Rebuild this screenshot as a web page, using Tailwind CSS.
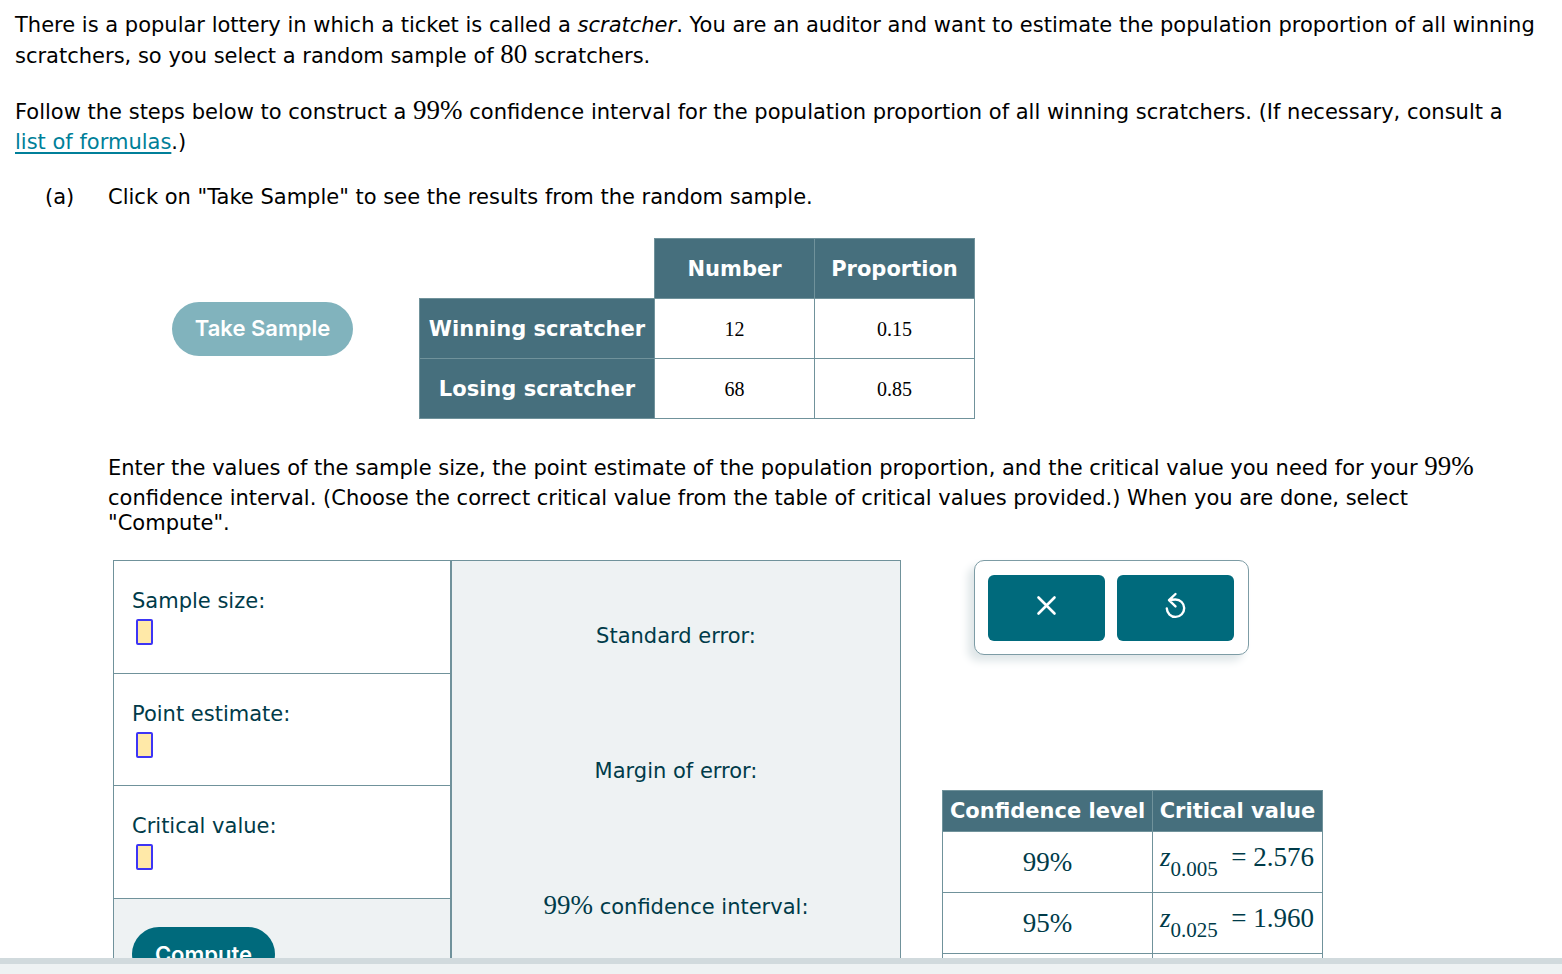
<!DOCTYPE html>
<html lang="en">
<head>
    <meta charset="UTF-8">
    <meta name="viewport" content="width=device-width, initial-scale=1.0">
    <title>Confidence interval for a population proportion</title>
    <script src="https://cdn.jsdelivr.net/npm/@tailwindcss/browser@4"></script>
</head>
<body class="h-screen flex flex-col overflow-hidden bg-white font-[Verdana,'DejaVu_Sans',sans-serif] text-[21px] leading-[25px] text-black">
    <main class="flex-1 min-h-0 overflow-hidden pt-[13px] pl-[15px] pr-3">
        <p>
            There is a popular lottery in which a ticket is called a <i>scratcher</i>. You are an auditor and want to estimate the population proportion of all winning
            scratchers, so you select a random sample of <span class="inline-block pb-1 font-['Liberation_Serif',serif] text-[27px] leading-8">80</span> scratchers.
        </p>
        <p class="mt-5">
            Follow the steps below to construct a <span class="inline-block pb-1 font-['Liberation_Serif',serif] text-[27px] leading-8">99%</span> confidence interval for the population proportion of all winning scratchers. (If necessary, consult a
            <span class="whitespace-nowrap"><a href="#formulas" class="text-[#007f99] underline decoration-2 underline-offset-3">list of formulas</a>.)</span>
        </p>

        <section class="flex mt-[30px] pl-[30px]">
            <div class="w-[63px] shrink-0">(a)</div>
            <div class="flex-1 min-w-0">
                <p>Click on "Take Sample" to see the results from the random sample.</p>

                <div class="flex items-center mt-7 pl-16">
                    <button type="button" class="w-[181px] h-[54px] rounded-full bg-[#81b3bd] text-white font-['Inter',sans-serif] font-semibold text-[22px]">Take Sample</button>
                    <table class="ml-[66px] border-collapse text-center">
                        <thead>
                            <tr class="h-[60px] text-white">
                                <td class="w-[235px]"></td>
                                <th scope="col" class="w-40 pt-0.5 bg-[#466f7d] border border-[#70929b]">Number</th>
                                <th scope="col" class="w-40 pt-0.5 bg-[#466f7d] border border-[#70929b]">Proportion</th>
                            </tr>
                        </thead>
                        <tbody class="font-['Liberation_Serif',serif] text-[20px]">
                            <tr class="h-[60px]">
                                <th scope="row" class="pt-0.5 bg-[#466f7d] border border-[#70929b] text-white font-[Verdana,'DejaVu_Sans',sans-serif] text-[21px] whitespace-nowrap">Winning scratcher</th>
                                <td class="pt-0.5 border border-[#70929b]">12</td>
                                <td class="pt-0.5 border border-[#70929b]">0.15</td>
                            </tr>
                            <tr class="h-[60px]">
                                <th scope="row" class="pt-0.5 bg-[#466f7d] border border-[#70929b] text-white font-[Verdana,'DejaVu_Sans',sans-serif] text-[21px] whitespace-nowrap">Losing scratcher</th>
                                <td class="pt-0.5 border border-[#70929b]">68</td>
                                <td class="pt-0.5 border border-[#70929b]">0.85</td>
                            </tr>
                        </tbody>
                    </table>
                </div>

                <p class="mt-[31px] pr-10">
                    Enter the values of the sample size, the point estimate of the population proportion, and the critical value you need for your <span class="inline-block pb-1 font-['Liberation_Serif',serif] text-[27px] leading-8">99%</span>
                    confidence interval. (Choose the correct critical value from the table of critical values provided.) When you are done, select "Compute".
                </p>

                <div class="flex items-start mt-6 pl-[5px] text-[#003b49]">
                    <form class="flex w-[788px] shrink-0 border border-[#70929b] bg-[#eef2f3]">
                        <div class="w-[336px]">
                            <div class="h-[113px] pt-7 pl-[18px] bg-white border-b border-[#70929b]">
                                <label for="sampleSize" class="block">Sample size:</label>
                                <input id="sampleSize" type="text" class="block w-[17px] h-[26px] mt-[5px] ml-1 rounded-[2px] border-2 border-[#3d35f5] bg-[#ffe9a8]">
                            </div>
                            <div class="h-[112px] pt-7 pl-[18px] bg-white border-b border-[#70929b]">
                                <label for="pointEstimate" class="block">Point estimate:</label>
                                <input id="pointEstimate" type="text" class="block w-[17px] h-[26px] mt-[5px] ml-1 rounded-[2px] border-2 border-[#3d35f5] bg-[#ffe9a8]">
                            </div>
                            <div class="h-[113px] pt-7 pl-[18px] bg-white border-b border-[#70929b]">
                                <label for="criticalValue" class="block">Critical value:</label>
                                <input id="criticalValue" type="text" class="block w-[17px] h-[26px] mt-[5px] ml-1 rounded-[2px] border-2 border-[#3d35f5] bg-[#ffe9a8]">
                            </div>
                            <div class="pt-7 pb-7 pl-[18px]">
                                <button type="button" class="w-[143px] h-[54px] rounded-full bg-[#006a7c] text-white font-['Inter',sans-serif] font-semibold text-[22px]">Compute</button>
                            </div>
                        </div>
                        <div class="flex-1 pt-2 border-l-2 border-[#70929b] text-center">
                            <div class="h-[135px] flex items-center justify-center">Standard error:</div>
                            <div class="h-[135px] flex items-center justify-center">Margin of error:</div>
                            <div class="h-[135px] flex items-center justify-center">
                                <p><span class="inline-block pb-1 font-['Liberation_Serif',serif] text-[27px] leading-8">99%</span> confidence interval:</p>
                            </div>
                        </div>
                    </form>

                    <div class="ml-[41px]">
                        <div class="flex gap-3 w-[275px] ml-8 px-[13px] py-3.5 h-[95px] rounded-[10px] border border-[#7d9ca5] bg-white shadow-[-6px_6px_9px_#dfe6e8]">
                            <button type="button" aria-label="Clear" class="w-[117px] h-[66px] flex items-center justify-center rounded-md bg-[#006a7c] text-white">
                                <svg width="24" height="24" viewBox="0 0 24 24" fill="none" stroke="currentColor" stroke-width="2.6" stroke-linecap="round" class="mb-1.5">
                                    <path d="M3.500 4.500 19.500 20.500M19.500 4.500 3.500 20.500"/>
                                </svg>
                            </button>
                            <button type="button" aria-label="Reset" class="w-[117px] h-[66px] flex items-center justify-center rounded-md bg-[#006a7c] text-white">
                                <svg width="24" height="28" viewBox="0 0 24 28" fill="none" stroke="currentColor" stroke-width="2.4" stroke-linecap="round" stroke-linejoin="round" class="mb-1.5">
                                    <path d="M11.500 3 5 9.200l6.500 6.200M5 9.200C7 8.500 9 8.500 11.500 8.500A8.700 8.700 0 1 1 2.800 17.500"/>
                                </svg>
                            </button>
                        </div>

                        <table class="mt-[135px] border-collapse">
                            <thead>
                                <tr class="h-[41px] bg-[#466f7d] text-white whitespace-nowrap">
                                    <th scope="col" class="w-[210px] border border-[#70929b]">Confidence level</th>
                                    <th scope="col" class="w-[170px] border border-[#70929b]">Critical value</th>
                                </tr>
                            </thead>
                            <tbody class="font-['Liberation_Serif',serif] text-[27px] text-center">
                                <tr class="h-[61px]">
                                    <td class="border border-[#70929b]">99%</td>
                                    <td class="border border-[#70929b]">
                                        <div class="flex items-center pl-[7px] pr-2 pb-2.5"><i>z</i><span class="mt-6 text-[21px]">0.005</span><span class="ml-auto">= 2.576</span></div>
                                    </td>
                                </tr>
                                <tr class="h-[61px]">
                                    <td class="border border-[#70929b]">95%</td>
                                    <td class="border border-[#70929b]">
                                        <div class="flex items-center pl-[7px] pr-2 pb-2.5"><i>z</i><span class="mt-6 text-[21px]">0.025</span><span class="ml-auto">= 1.960</span></div>
                                    </td>
                                </tr>
                                <tr class="h-[61px]">
                                    <td class="border border-[#70929b]"></td>
                                    <td class="border border-[#70929b]"></td>
                                </tr>
                            </tbody>
                        </table>
                    </div>
                </div>
            </div>
        </section>
    </main>
    <footer class="h-4 shrink-0 border-t-6 border-[#d1dadd] bg-[#eef2f3]"></footer>
</body>
</html>
